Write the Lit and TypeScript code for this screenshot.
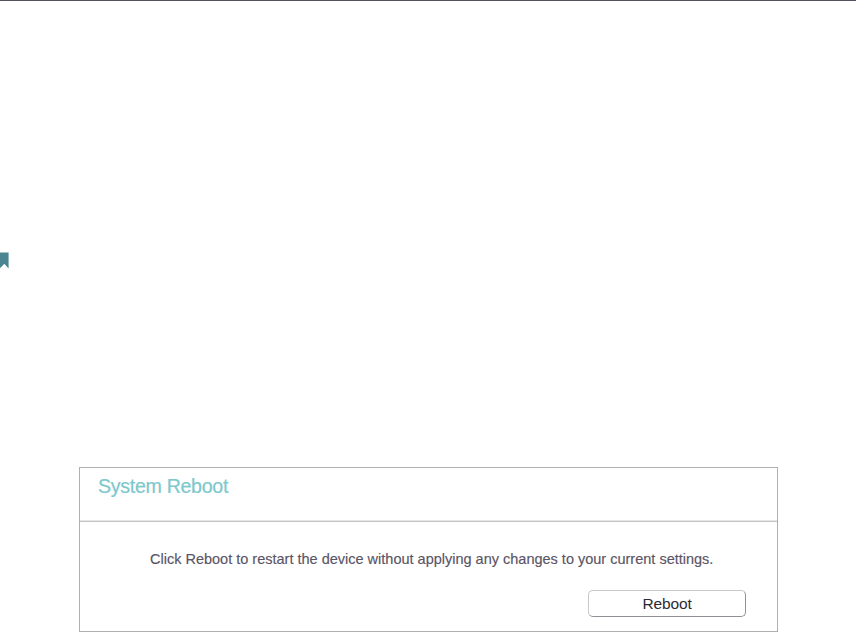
import { LitElement, html, css } from "lit";
import { customElement } from "lit/decorators.js";

@customElement("app-root")
export class AppRoot extends LitElement {
  static styles = css`
    :host { display: block; }
    .page { box-sizing: border-box; height: 632px; display: flex; flex-direction: column; background: #fff; border-top: 1px solid #554f5f; overflow: hidden; font-family: "Liberation Sans", Arial, sans-serif; }
    .mark { display: block; width: 9px; height: 17px; margin-top: 251px; flex: none; }
    .panel { box-sizing: border-box; width: 699px; height: 165px; margin: 198px 0 0 79px; border: 1px solid #b0b0b0; display: flex; flex-direction: column; flex: none; }
    .head { box-sizing: border-box; height: 54px; padding: 7px 0 0 18px; border-bottom: 1px solid #c4c4c4; box-shadow: inset 0 -1px #e4e4e4; }
    .title { margin: 0; font-size: 19.6px; line-height: 23px; font-weight: 400; letter-spacing: -0.3px; color: #7cc8cc; -webkit-text-stroke: 0.2px #7cc8cc; white-space: nowrap; }
    .body { display: flex; flex-direction: column; align-items: flex-start; flex: 1; }
    .text { margin: 28px 0 0 70px; font-size: 14.5px; line-height: 18px; color: #5a5465; -webkit-text-stroke: 0.15px #5a5465; white-space: nowrap; }
    .button { box-sizing: border-box; width: 158px; height: 27px; margin: 22px 31px 0 auto; padding: 0; border: 1px solid; border-color: #c8c8ca #909096 #909096 #c8c8ca; border-radius: 5px; background: #fff; font: 15.5px/25px "Liberation Sans", Arial, sans-serif; letter-spacing: -0.15px; color: #2e2a33; }
  `;

  render() {
    return html`
      <main class="page">
        <svg class="mark" viewBox="0 0 9 17"><path d="M0 .4H8.6V16.5L4.3 11.8L0 16.3Z" fill="#4b8592" /></svg>
        <section class="panel">
          <header class="head"><h1 class="title">System Reboot</h1></header>
          <div class="body">
            <p class="text">Click Reboot to restart the device without applying any changes to your current settings.</p>
            <button class="button">Reboot</button>
          </div>
        </section>
      </main>
    `;
  }
}
